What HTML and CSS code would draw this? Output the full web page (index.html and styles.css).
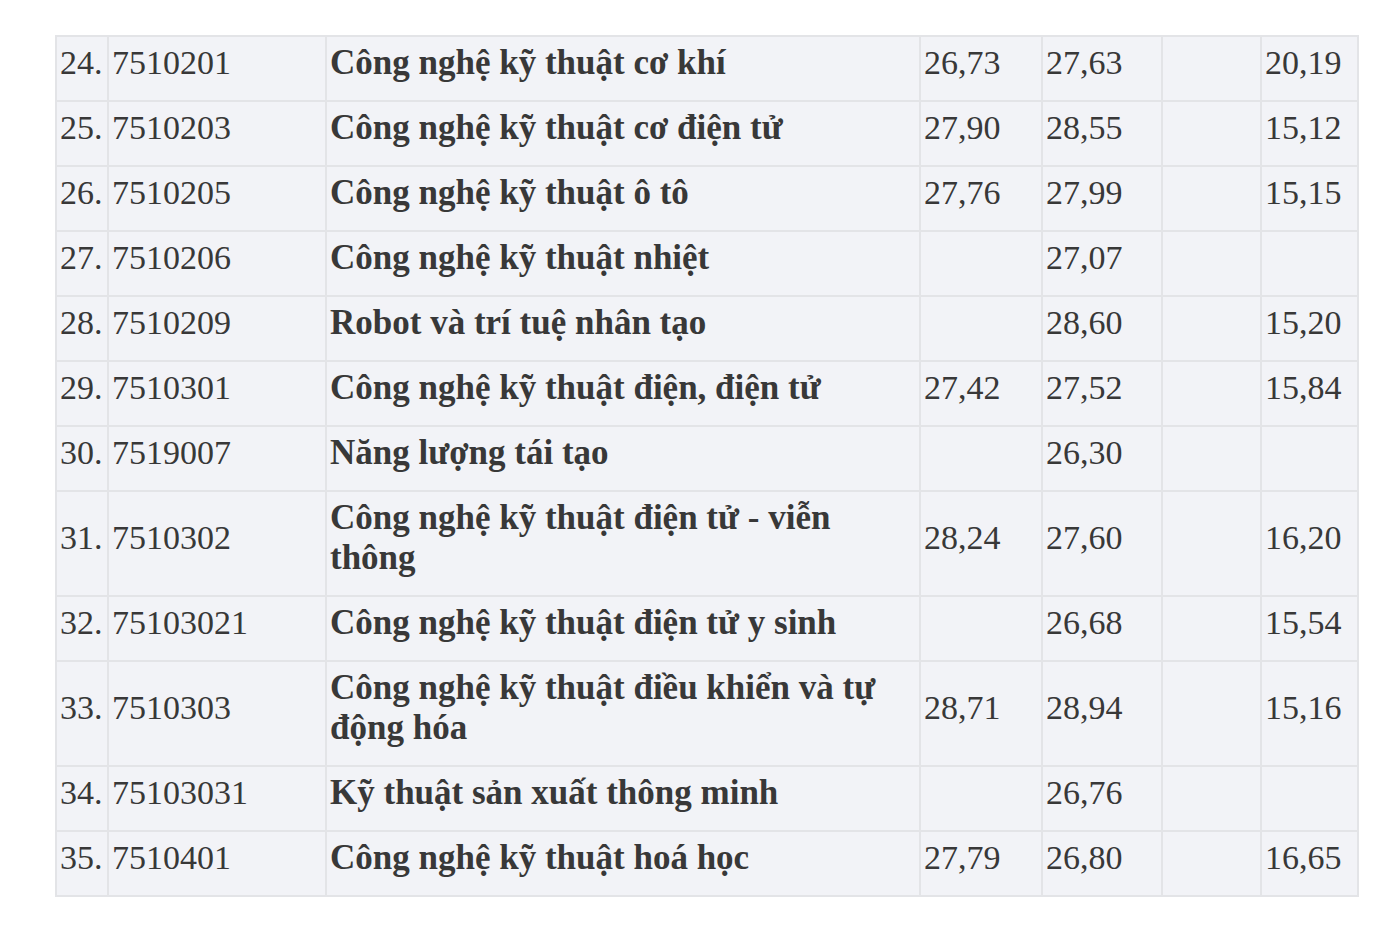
FILE: index.html
```html
<!DOCTYPE html>
<html>
<head>
<meta charset="utf-8">
<link rel="stylesheet" href="styles.css">
</head>
<body>
<table class="scores">
<colgroup>
<col class="c-no"><col class="c-code"><col class="c-name"><col class="c-a"><col class="c-b"><col class="c-c"><col class="c-d">
</colgroup>
<tbody>
<tr><td>24.</td><td>7510201</td><td class="name">Công nghệ kỹ thuật cơ khí</td><td>26,73</td><td>27,63</td><td></td><td>20,19</td></tr>
<tr><td>25.</td><td>7510203</td><td class="name">Công nghệ kỹ thuật cơ điện tử</td><td>27,90</td><td>28,55</td><td></td><td>15,12</td></tr>
<tr><td>26.</td><td>7510205</td><td class="name">Công nghệ kỹ thuật ô tô</td><td>27,76</td><td>27,99</td><td></td><td>15,15</td></tr>
<tr><td>27.</td><td>7510206</td><td class="name">Công nghệ kỹ thuật nhiệt</td><td></td><td>27,07</td><td></td><td></td></tr>
<tr><td>28.</td><td>7510209</td><td class="name">Robot và trí tuệ nhân tạo</td><td></td><td>28,60</td><td></td><td>15,20</td></tr>
<tr><td>29.</td><td>7510301</td><td class="name">Công nghệ kỹ thuật điện, điện tử</td><td>27,42</td><td>27,52</td><td></td><td>15,84</td></tr>
<tr><td>30.</td><td>7519007</td><td class="name">Năng lượng tái tạo</td><td></td><td>26,30</td><td></td><td></td></tr>
<tr><td>31.</td><td>7510302</td><td class="name">Công nghệ kỹ thuật điện tử - viễn thông</td><td>28,24</td><td>27,60</td><td></td><td>16,20</td></tr>
<tr><td>32.</td><td>75103021</td><td class="name">Công nghệ kỹ thuật điện tử y sinh</td><td></td><td>26,68</td><td></td><td>15,54</td></tr>
<tr><td>33.</td><td>7510303</td><td class="name">Công nghệ kỹ thuật điều khiển và tự động hóa</td><td>28,71</td><td>28,94</td><td></td><td>15,16</td></tr>
<tr><td>34.</td><td>75103031</td><td class="name">Kỹ thuật sản xuất thông minh</td><td></td><td>26,76</td><td></td><td></td></tr>
<tr><td>35.</td><td>7510401</td><td class="name">Công nghệ kỹ thuật hoá học</td><td>27,79</td><td>26,80</td><td></td><td>16,65</td></tr>
</tbody>
</table>
</body>
</html>
```
FILE: styles.css
```css
html, body {
  margin: 0;
  padding: 0;
  background: #ffffff;
}
body {
  padding: 35px 0 0 55px;
  font-family: "Liberation Serif", serif;
  color: #383838;
}
.scores {
  border-collapse: collapse;
  table-layout: fixed;
  width: 1302px;
  background: #f2f3f7;
  font-size: 34px;
  line-height: 40px;
}
.c-no { width: 52px; }
.c-code { width: 218px; }
.c-name { width: 594px; }
.c-a { width: 122px; }
.c-b { width: 120px; }
.c-c { width: 99px; }
.c-d { width: 97px; }
.scores td {
  border: 2px solid #e3e4e7;
  padding: 6px 3px 17px 3px;
  vertical-align: middle;
  white-space: nowrap;
}
.scores td.name {
  font-weight: bold;
  font-size: 35px;
  white-space: normal;
  padding-right: 14px;
}
```
